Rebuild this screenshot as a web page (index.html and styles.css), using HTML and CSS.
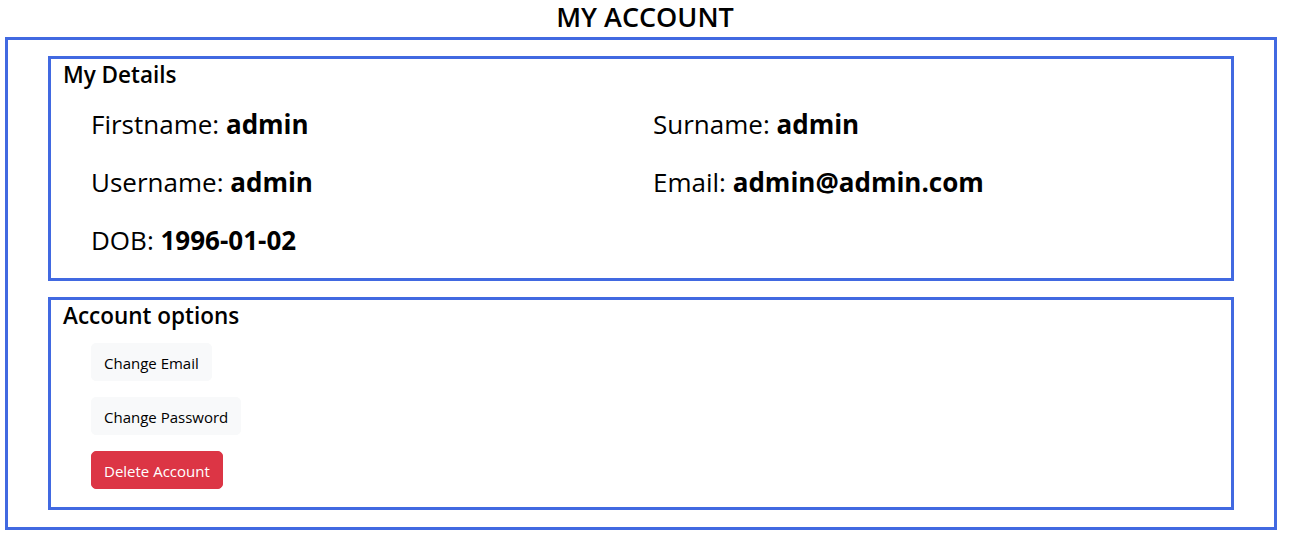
FILE: index.html
```html
<!DOCTYPE html>
<html>
<head>
<meta charset="utf-8">
<link rel="stylesheet" href="styles.css">
</head>
<body>
<h4 class="title">MY ACCOUNT</h4>
<div class="outer">
  <section class="box details">
    <h5 class="box-title">My Details</h5>
    <div class="detail-grid">
      <p class="detail">Firstname: <b>admin</b></p>
      <p class="detail">Surname: <b>admin</b></p>
      <p class="detail">Username: <b>admin</b></p>
      <p class="detail">Email: <b>admin@admin.com</b></p>
      <p class="detail">DOB: <b>1996-01-02</b></p>
    </div>
  </section>
  <section class="box options">
    <h5 class="box-title">Account options</h5>
    <div class="btn-list">
      <button class="btn btn-light">Change Email</button>
      <button class="btn btn-light">Change Password</button>
      <button class="btn btn-danger">Delete Account</button>
    </div>
  </section>
</div>
</body>
</html>
```

FILE: styles.css
```css
* { box-sizing: border-box; }
body {
  margin: 0;
  font-family: "Segoe UI", "Open Sans", sans-serif;
  color: #000;
  background: #fff;
}
.title {
  margin: 0 0 4px;
  text-align: center;
  font-size: 27px;
  line-height: 33px;
  font-weight: 600;
}
.outer {
  margin: 0 13px 0 5px;
  border: 3px solid #4169e1;
  padding: 16px 40px 17px;
  display: flex;
  flex-direction: column;
  gap: 16px;
}
.box {
  border: 3px solid #4169e1;
}
.box-title {
  margin: 0;
  padding: 2px 12px 0;
  font-size: 22.5px;
  line-height: 28px;
  font-weight: 600;
}
.detail-grid {
  display: grid;
  grid-template-columns: 1fr 1fr;
  padding: 17px 16px 20px 40px;
  row-gap: 22px;
}
.detail {
  margin: 0;
  font-size: 26px;
  line-height: 36px;
}
.detail b { font-weight: 700; }
.btn-list {
  display: flex;
  flex-direction: column;
  align-items: flex-start;
  gap: 16px;
  padding: 13px 40px 18px;
}
.btn {
  font-family: inherit;
  font-size: 15px;
  line-height: 24px;
  padding: 7px 12px;
  border: 1px solid transparent;
  border-radius: 5px;
  height: 38px;
}
.btn-light {
  background: #f8f9fa;
  border-color: #f8f9fa;
  color: #000;
}
.btn-danger {
  background: #dc3545;
  border-color: #dc3545;
  color: #fff;
}
```
